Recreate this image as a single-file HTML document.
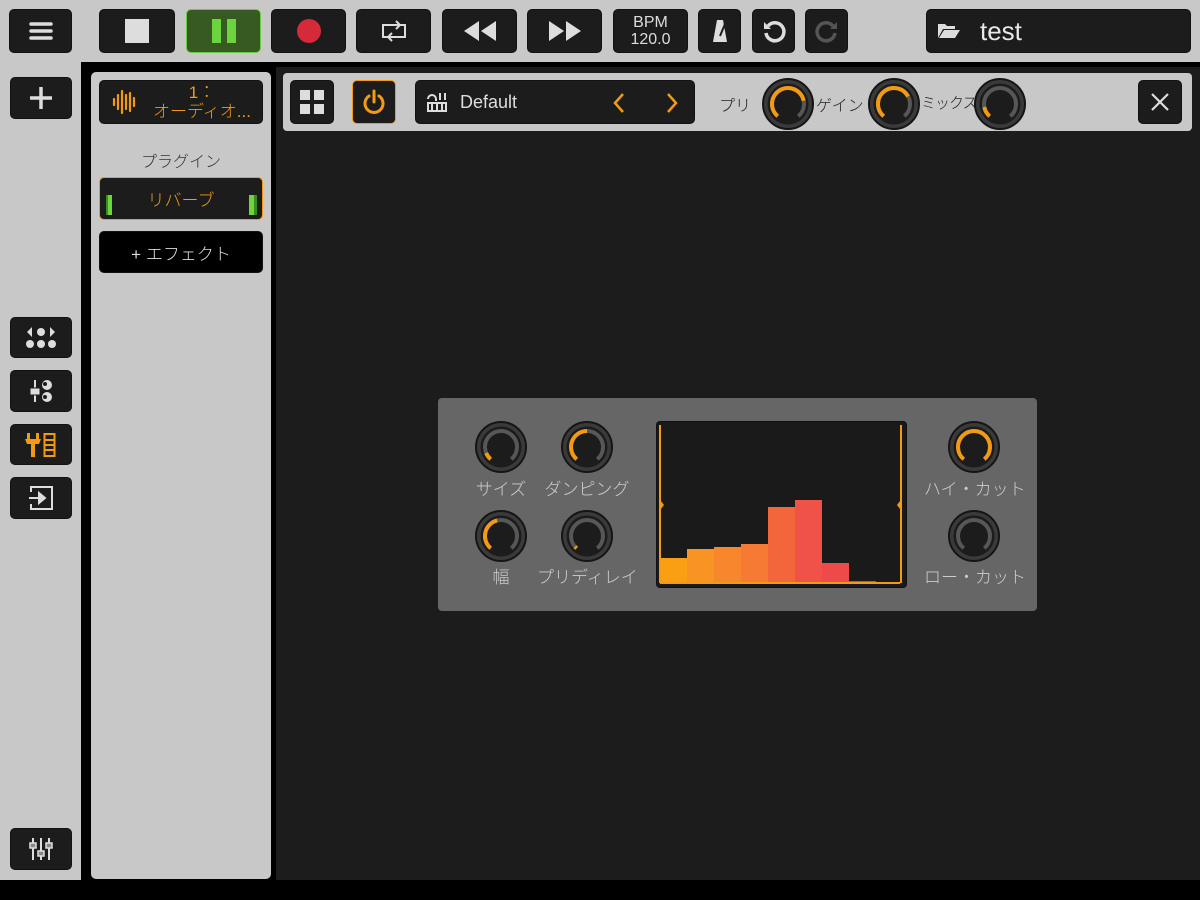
<!DOCTYPE html>
<html><head><meta charset="utf-8">
<style>
*{margin:0;padding:0;box-sizing:border-box}
body{width:1200px;height:900px;background:#000;position:relative;overflow:hidden;font-family:"Liberation Sans","Noto Sans CJK JP",sans-serif}
.a{position:absolute}
.btn{position:absolute;background:#1c1c1c;border-radius:5px;border:1px solid #111;display:flex;align-items:center;justify-content:center;color:#ddd}
.t{position:absolute;color:#ccc;font-size:17px;white-space:nowrap;text-align:center;font-weight:300}
</style></head><body>
<div class="a" style="left:0;top:0;width:1200px;height:62px;background:#c8c8c8"></div>
<div class="a" style="left:0;top:0;width:81px;height:880px;background:#c8c8c8"></div>
<div class="a" style="left:276px;top:67px;width:924px;height:813px;background:#1c1c1c"></div>
<div class="a" style="left:91px;top:72px;width:180px;height:807px;background:#c8c8c8;border-radius:5px"></div>

<div class="btn" style="left:9px;top:9px;width:63px;height:44px"><svg width="26" height="20"><g stroke="#ddd" stroke-width="3.5" stroke-linecap="round"><line x1="3" y1="3" x2="23" y2="3"/><line x1="3" y1="10" x2="23" y2="10"/><line x1="3" y1="17" x2="23" y2="17"/></g></svg></div>
<div class="btn" style="left:99px;top:9px;width:76px;height:44px"><div style="width:24px;height:24px;background:#ddd"></div></div>
<div class="btn" style="left:186px;top:9px;width:75px;height:44px;background:#365a22;border:1px solid #6ccc3c"><svg width="26" height="26"><rect x="1" y="1" width="9" height="24" fill="#6cd43c"/><rect x="16" y="1" width="9" height="24" fill="#6cd43c"/></svg></div>
<div class="btn" style="left:271px;top:9px;width:75px;height:44px"><div style="width:24px;height:24px;border-radius:50%;background:#d42a3a"></div></div>
<div class="btn" style="left:356px;top:9px;width:75px;height:44px"><svg width="30" height="24" fill="none" stroke="#ddd" stroke-width="2"><path d="M10 6H26V18H19M20 18H4V6H11"/><path d="M17 2l4 4-4 4" /><path d="M13 14l-4 4 4 4"/></svg></div>
<div class="btn" style="left:442px;top:9px;width:75px;height:44px"><svg width="36" height="22" fill="#ddd"><path d="M17 1V21L2 11Z M34 1V21L19 11Z"/></svg></div>
<div class="btn" style="left:527px;top:9px;width:75px;height:44px"><svg width="36" height="22" fill="#ddd"><path d="M2 1V21L17 11Z M19 1V21L34 11Z"/></svg></div>
<div class="btn" style="left:613px;top:9px;width:75px;height:44px;flex-direction:column;font-size:16px;line-height:17px;color:#ddd"><div>BPM</div><div>120.0</div></div>
<div class="btn" style="left:698px;top:9px;width:43px;height:44px"><svg width="16" height="26"><path d="M5 2H11L15 24H1Z" fill="#ddd"/><line x1="8" y1="18" x2="13" y2="6" stroke="#1c1c1c" stroke-width="2"/></svg></div>
<div class="btn" style="left:752px;top:9px;width:43px;height:44px"><svg width="26" height="26" fill="none" stroke="#ddd" stroke-width="3.5"><path d="M7 8A9 9 0 1 1 5 15"/><path d="M3 4L3 11L10 11Z" fill="#ddd" stroke="none"/></svg></div>
<div class="btn" style="left:805px;top:9px;width:43px;height:44px"><svg width="26" height="26" fill="none" stroke="#555" stroke-width="3.5"><path d="M19 8A9 9 0 1 0 21 15"/><path d="M23 4L23 11L16 11Z" fill="#555" stroke="none"/></svg></div>
<div class="btn" style="left:926px;top:9px;width:265px;height:44px;justify-content:flex-start;padding-left:10px"><svg width="24" height="18"><path d="M1 2H8L10 4H18V7H6L1 16Z M7 8H23L18 16H2Z" fill="#ddd"/></svg><span style="font-size:26px;margin-left:19px;color:#e8e8e8">test</span></div>

<div class="btn" style="left:10px;top:77px;width:62px;height:42px"><svg width="26" height="26" stroke="#ddd" stroke-width="3.5"><line x1="13" y1="2" x2="13" y2="24"/><line x1="2" y1="13" x2="24" y2="13"/></svg></div>
<div class="btn" style="left:10px;top:317px;width:62px;height:41px"><svg width="32" height="22" fill="#ddd"><circle cx="16" cy="5" r="4"/><path d="M2 5L7 0V10Z M30 5L25 0V10Z"/><circle cx="5" cy="17" r="4"/><circle cx="16" cy="17" r="4"/><circle cx="27" cy="17" r="4"/></svg></div>
<div class="btn" style="left:10px;top:370px;width:62px;height:42px"><svg width="26" height="26" fill="#ddd"><rect x="6" y="2" width="2" height="22"/><rect x="2" y="10" width="10" height="7" stroke="#1c1c1c" stroke-width="1"/><circle cx="19" cy="7" r="5"/><circle cx="19" cy="19" r="5"/><circle cx="17" cy="6" r="2" fill="#1c1c1c"/><circle cx="17" cy="19" r="2" fill="#1c1c1c"/></svg></div>
<div class="btn" style="left:10px;top:424px;width:62px;height:41px"><svg width="32" height="24" fill="#f39a14"><rect x="2" y="0" width="3" height="6"/><rect x="11" y="0" width="3" height="6"/><path d="M0 6H16L14 11H10V24H6V11H2Z"/><rect x="19.5" y="1" width="10" height="22" fill="none" stroke="#f39a14" stroke-width="2"/><rect x="19" y="6" width="11" height="2"/><rect x="19" y="11" width="11" height="2"/><rect x="19" y="16" width="11" height="2"/></svg></div>
<div class="btn" style="left:10px;top:477px;width:62px;height:42px"><svg width="26" height="24" fill="none" stroke="#ddd" stroke-width="2"><path d="M3 6V1H24V23H3V18"/><line x1="1" y1="12" x2="12" y2="12"/><path d="M11 7L17 12L11 17Z" fill="#ddd"/></svg></div>
<div class="btn" style="left:10px;top:828px;width:62px;height:42px"><svg width="26" height="26"><g stroke="#ddd" stroke-width="2"><line x1="5" y1="2" x2="5" y2="24"/><line x1="13" y1="2" x2="13" y2="24"/><line x1="21" y1="2" x2="21" y2="24"/></g><g fill="#888" stroke="#ddd" stroke-width="1.5"><rect x="2" y="7" width="6" height="5"/><rect x="10" y="15" width="6" height="5"/><rect x="18" y="7" width="6" height="5"/></g></svg></div>

<div class="btn" style="left:99px;top:80px;width:164px;height:44px"><svg width="28" height="26" stroke="#f39a14" stroke-width="2.2" stroke-linecap="round"><line x1="3" y1="10" x2="3" y2="16"/><line x1="7" y1="6" x2="7" y2="20"/><line x1="11" y1="2" x2="11" y2="24"/><line x1="15" y1="6" x2="15" y2="20"/><line x1="19" y1="4" x2="19" y2="22"/><line x1="23" y1="9" x2="23" y2="17"/></svg><div style="color:#f39a14;font-size:17px;line-height:19px;text-align:center;margin-left:14px;font-weight:300">1：<br>オーディオ...</div></div>
<div class="t" style="left:91px;top:148px;width:180px;color:#333;font-size:16px">プラグイン</div>
<div class="btn" style="left:99px;top:177px;width:164px;height:43px;border:1px solid #f39a14;color:#f39a14;font-size:17px;font-weight:300">リバーブ
<div class="a" style="left:6px;top:17px;width:6px;height:20px;background:#6cd43c;border-left:2px solid #3a8a1c"></div>
<div class="a" style="left:149px;top:17px;width:8px;height:20px;background:#6cd43c;box-shadow:inset -3px 0 0 #3a8a1c"></div></div>
<div class="btn" style="left:99px;top:231px;width:164px;height:42px;background:#000;font-size:17px;color:#ddd;font-weight:300">+ エフェクト</div>

<div class="a" style="left:283px;top:73px;width:909px;height:58px;background:#c8c8c8;border-radius:4px"></div>
<div class="btn" style="left:290px;top:80px;width:44px;height:44px"><svg width="26" height="26" fill="#ddd"><rect x="1" y="1" width="10" height="10"/><rect x="15" y="1" width="10" height="10"/><rect x="1" y="15" width="10" height="10"/><rect x="15" y="15" width="10" height="10"/></svg></div>
<div class="btn" style="left:352px;top:80px;width:44px;height:44px;border:1px solid #f39a14"><svg width="24" height="26" fill="none" stroke="#f39a14" stroke-width="3" stroke-linecap="round"><path d="M7 7A9 9 0 1 0 17 7"/><line x1="12" y1="2" x2="12" y2="13"/></svg></div>
<div class="btn" style="left:415px;top:80px;width:280px;height:44px;justify-content:flex-start;padding-left:10px"><svg width="22" height="22" fill="none" stroke="#ddd" stroke-width="2"><path d="M2 8A4 4 0 0 1 10 8V10"/><rect x="2" y="12" width="18" height="8"/><line x1="6" y1="12" x2="6" y2="20"/><line x1="11" y1="12" x2="11" y2="20"/><line x1="16" y1="12" x2="16" y2="20"/><line x1="14" y1="2" x2="14" y2="9"/><line x1="19" y1="2" x2="19" y2="9"/></svg><span style="font-size:18px;margin-left:12px;color:#ddd">Default</span>
<svg class="a" style="left:196px;top:11px" width="14" height="22" fill="none" stroke="#f39a14" stroke-width="2.5"><path d="M11 2L3 11L11 20"/></svg>
<svg class="a" style="left:249px;top:11px" width="14" height="22" fill="none" stroke="#f39a14" stroke-width="2.5"><path d="M3 2L11 11L3 20"/></svg></div>
<div class="t" style="left:719px;top:92px;color:#222;font-size:16px">プリ</div>
<div class="t" style="left:816px;top:92px;color:#222;font-size:16px">ゲイン</div>
<div class="t" style="left:921px;top:92px;color:#222;font-size:15px;letter-spacing:-1px">ミックス</div>
<div class="btn" style="left:1138px;top:80px;width:44px;height:44px"><svg width="20" height="20" stroke="#ddd" stroke-width="2.2"><line x1="2" y1="2" x2="18" y2="18"/><line x1="18" y1="2" x2="2" y2="18"/></svg></div>

<div class="a" style="left:438px;top:398px;width:599px;height:213px;background:#666;border-radius:4px"></div>
<div class="t" style="left:461px;top:475px;width:80px">サイズ</div>
<div class="t" style="left:537px;top:475px;width:100px">ダンピング</div>
<div class="t" style="left:461px;top:563px;width:80px">幅</div>
<div class="t" style="left:537px;top:563px;width:100px">プリディレイ</div>
<div class="t" style="left:924px;top:475px;width:100px">ハイ・カット</div>
<div class="t" style="left:924px;top:563px;width:100px">ロー・カット</div>
<div class="a" style="left:656px;top:421px;width:251px;height:167px;background:#1a1a1a;border-radius:4px;border:1px solid #111"></div>
<div class="a" style="left:659px;top:425px;width:2px;height:158px;background:#f39a14"></div>
<div class="a" style="left:900px;top:425px;width:2px;height:158px;background:#f39a14"></div>
<div class="a" style="left:660px;top:582px;width:240px;height:2px;background:#f39a14"></div>
<svg class="a" style="left:0;top:0" width="1200" height="900" id="s">
<rect x="661" y="558" width="26" height="24" fill="#fb9f12"/>
<rect x="687" y="549" width="27" height="33" fill="#f99323"/>
<rect x="714" y="547" width="27" height="35" fill="#f8862c"/>
<rect x="741" y="544" width="27" height="38" fill="#f67a33"/>
<rect x="768" y="507" width="27" height="75" fill="#f3663b"/>
<rect x="795" y="500" width="27" height="82" fill="#f15247"/>
<rect x="822" y="563" width="27" height="19" fill="#ef4a4a"/>
<rect x="849" y="581" width="27" height="1" fill="#e83c4a"/>
<path d="M661 501l3 4-3 4Z M900 501l-3 4 3 4Z" fill="#f39a14"/>
</svg>
<script>
var s=document.getElementById('s'),NS='http://www.w3.org/2000/svg';
function pt(cx,cy,r,a){a=(a-90)*Math.PI/180;return [cx+r*Math.cos(a),cy+r*Math.sin(a)];}
function arc(cx,cy,r,a0,a1){var p=pt(cx,cy,r,a0),q=pt(cx,cy,r,a1);return 'M'+p[0]+' '+p[1]+'A'+r+' '+r+' 0 '+((a1-a0)>180?1:0)+' 1 '+q[0]+' '+q[1];}
function el(n,at){var e=document.createElementNS(NS,n);for(var k in at)e.setAttribute(k,at[k]);s.appendChild(e);}
function knob(cx,cy,v){
 el('circle',{cx:cx,cy:cy,r:25,fill:'#3a3a3a',stroke:'#151515','stroke-width':2});
 el('circle',{cx:cx,cy:cy,r:20.5,fill:'#1c1c1c'});
 el('path',{d:arc(cx,cy,16,-140,140),fill:'none',stroke:'#575757','stroke-width':4});
 if(v>0)el('path',{d:arc(cx,cy,16,-140,-140+280*v),fill:'none',stroke:'#f39a14','stroke-width':4});
}
knob(788,104,0.78);knob(894,104,0.72);knob(1000,104,0.14);
knob(501,447,0.1);knob(587,447,0.5);knob(501,536,0.45);knob(587,536,0.03);
knob(974,447,1);knob(974,536,0);
</script>
</body></html>
